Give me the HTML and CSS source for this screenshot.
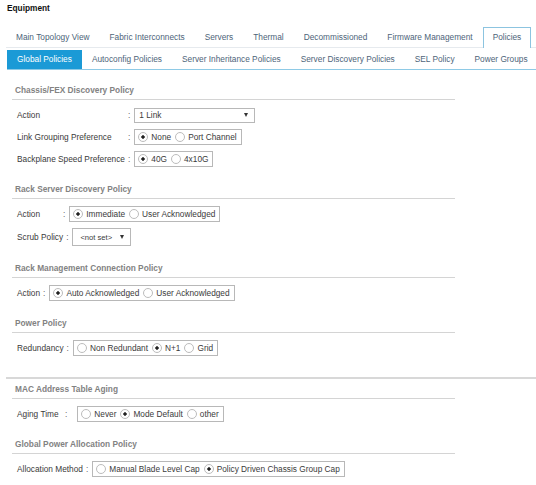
FILE: index.html
```html
<!DOCTYPE html>
<html lang="en">
<head>
    <meta charset="UTF-8">
    <meta name="viewport" content="width=device-width, initial-scale=1.0">
    <title>Equipment - Policies</title>
    <link rel="stylesheet" href="styles.css">
</head>
<body>

    <div class="title">Equipment</div>

    <!-- top level tabs -->
    <ul class="tabs tabs-main">
        <li>Main Topology View</li>
        <li>Fabric Interconnects</li>
        <li>Servers</li>
        <li>Thermal</li>
        <li>Decommissioned</li>
        <li>Firmware Management</li>
        <li class="active">Policies</li>
    </ul>

    <!-- policy tabs -->
    <ul class="tabs tabs-sub">
        <li class="active">Global Policies</li>
        <li>Autoconfig Policies</li>
        <li>Server Inheritance Policies</li>
        <li>Server Discovery Policies</li>
        <li>SEL Policy</li>
        <li>Power Groups</li>
    </ul>

    <div class="panel">
        <div class="sec-head">Chassis/FEX Discovery Policy</div>
        <div class="row">
            <span class="lbl w-chassis">Action</span><span class="colon">:</span>
            <div class="select select-wide"><span>1 Link</span><i class="arrow"></i></div>
        </div>
        <div class="row">
            <span class="lbl w-chassis">Link Grouping Preference</span><span class="colon">:</span>
            <div class="radios">
                <span class="opt on">None</span>
                <span class="opt">Port Channel</span>
            </div>
        </div>
        <div class="row">
            <span class="lbl w-chassis">Backplane Speed Preference</span><span class="colon">:</span>
            <div class="radios">
                <span class="opt on">40G</span>
                <span class="opt">4x10G</span>
            </div>
        </div>

        <div class="sec-head">Rack Server Discovery Policy</div>
        <div class="row">
            <span class="lbl w-action">Action</span><span class="colon">:</span>
            <div class="radios">
                <span class="opt on">Immediate</span>
                <span class="opt">User Acknowledged</span>
            </div>
        </div>
        <div class="row">
            <span class="lbl">Scrub Policy</span><span class="colon">:</span>
            <div class="select select-scrub"><span>&lt;not set&gt;</span><i class="arrow"></i></div>
        </div>

        <div class="sec-head">Rack Management Connection Policy</div>
        <div class="row">
            <span class="lbl">Action</span><span class="colon">:</span>
            <div class="radios">
                <span class="opt on">Auto Acknowledged</span>
                <span class="opt">User Acknowledged</span>
            </div>
        </div>

        <div class="sec-head">Power Policy</div>
        <div class="row">
            <span class="lbl">Redundancy</span><span class="colon">:</span>
            <div class="radios">
                <span class="opt">Non Redundant</span>
                <span class="opt on">N+1</span>
                <span class="opt">Grid</span>
            </div>
        </div>
    </div>

    <div class="divider"></div>

    <div class="panel">
        <div class="sec-head first">MAC Address Table Aging</div>
        <div class="row">
            <span class="lbl w-aging">Aging Time</span><span class="colon wide">:</span>
            <div class="radios">
                <span class="opt">Never</span>
                <span class="opt on">Mode Default</span>
                <span class="opt">other</span>
            </div>
        </div>

        <div class="sec-head">Global Power Allocation Policy</div>
        <div class="row">
            <span class="lbl">Allocation Method</span><span class="colon">:</span>
            <div class="radios">
                <span class="opt">Manual Blade Level Cap</span>
                <span class="opt on">Policy Driven Chassis Group Cap</span>
            </div>
        </div>
    </div>

</body>
</html>
```

FILE: styles.css
```css
* {
    box-sizing: border-box;
}
body {
    margin: 0;
    font-family: "Liberation Sans", Arial, sans-serif;
    font-size: 8.3px;
    color: #3a3a3a;
    background-color: #fff;
}
.title {
    height: 27px;
    padding: 3px 7px 0;
    line-height: 10px;
    font-weight: bold;
    color: #111;
}
/* tabs */
.tabs {
    display: flex;
    list-style: none;
    margin: 0;
    padding: 0;
    white-space: nowrap;
}
.tabs li {
    color: #4d6479;
}
.tabs-main {
    margin-left: 6px;
    margin-bottom: 2px;
    border-bottom: 1px solid #e6eaee;
}
.tabs-main li {
    height: 20px;
    line-height: 19px;
    padding: 0 9px;
    border: 1px solid transparent;
    border-bottom: none;
}
.tabs-main li.active {
    border-color: #8cc4e0;
    background-color: #fff;
    margin-bottom: -1px;
    height: 21px;
}
.tabs-sub {
    margin-left: 7px;
    border-bottom: 1px solid #8ecae6;
}
.tabs-sub li {
    height: 19px;
    line-height: 19px;
    padding: 0 10px;
}
.tabs-sub li.active {
    background-color: #1b9ad6;
    color: #fff;
}
/* policy sections */
.panel {
    margin-left: 12px;
    width: 443px;
}
.sec-head {
    margin-top: 17px;
    padding: 0 0 4px 3px;
    line-height: 10px;
    border-bottom: 1px solid #d4d4d4;
    color: #828282;
    font-weight: bold;
}
.tabs-sub + .panel .sec-head:first-child {
    margin-top: 15px;
}
.sec-head.first {
    margin-top: 5px;
}
.divider {
    margin: 21px 0 0 6px;
    border-top: 2px solid #d8d8d8;
}
.row {
    display: flex;
    align-items: center;
    min-height: 16px;
    margin-top: 5px;
    padding-left: 5px;
    white-space: nowrap;
}
.row + .row {
    margin-top: 6px;
}
.sec-head + .row {
    margin-top: 7px;
}
.lbl {
    padding-right: 3px;
}
.w-chassis {
    width: 111px;
}
.w-action {
    width: 46px;
}
.w-aging {
    width: 48px;
}
.colon {
    margin-right: 4px;
    color: #666;
}
.colon.wide {
    margin-right: 10px;
}
/* controls */
.radios {
    display: flex;
    align-items: center;
    height: 16px;
    padding: 0 4px 0 3px;
    border: 1px solid #b8b8b8;
}
.opt {
    display: flex;
    align-items: center;
    margin-right: 4px;
}
.opt:last-child {
    margin-right: 0;
}
.opt::before {
    content: "";
    width: 8px;
    height: 8px;
    margin-right: 3px;
    border: 1px solid #bcbcbc;
    border-radius: 50%;
    background-color: #fff;
}
.opt.on::before {
    background: radial-gradient(circle, #222 0 1.4px, #fff 2px);
}
.select {
    display: flex;
    align-items: center;
    justify-content: space-between;
    border: 1px solid #b8b8b8;
    padding: 0 6px 0 4px;
}
.select-wide {
    width: 121px;
    height: 15px;
}
.select-scrub {
    width: 59px;
    height: 18px;
    padding-left: 7px;
    font-size: 7.6px;
}
.arrow {
    width: 0;
    height: 0;
    border-left: 2px solid transparent;
    border-right: 2px solid transparent;
    border-top: 4px solid #333;
}
```
